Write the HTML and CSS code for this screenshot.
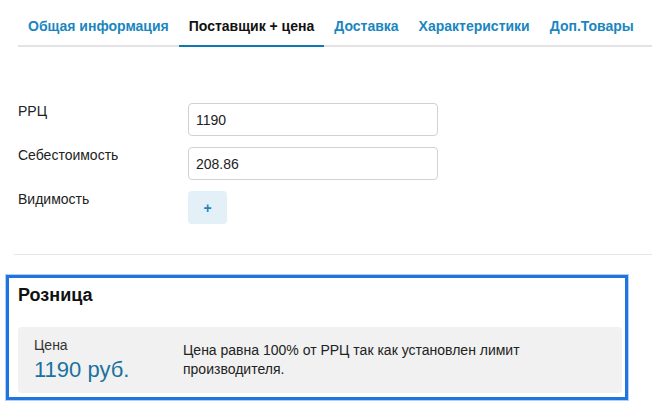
FILE: index.html
```html
<!DOCTYPE html>
<html lang="ru">
<head>
<meta charset="utf-8">
<link rel="stylesheet" href="styles.css">
</head>
<body>
<nav class="tabs">
  <a class="tab">Общая информация</a>
  <a class="tab active">Поставщик + цена</a>
  <a class="tab">Доставка</a>
  <a class="tab">Характеристики</a>
  <a class="tab">Доп.Товары</a>
</nav>
<form class="form">
  <div class="row">
    <label class="label">РРЦ</label>
    <input class="input" type="text" value="1190">
  </div>
  <div class="row">
    <label class="label">Себестоимость</label>
    <input class="input" type="text" value="208.86">
  </div>
  <div class="row">
    <label class="label">Видимость</label>
    <button class="plus" type="button">+</button>
  </div>
</form>
<hr class="sep">
<section class="retail">
  <h2 class="retail-title">Розница</h2>
  <div class="panel">
    <div class="price">
      <div class="price-label">Цена</div>
      <div class="price-value">1190 руб.</div>
    </div>
    <div class="desc">Цена равна 100% от РРЦ так как установлен лимит производителя.</div>
  </div>
</section>
</body>
</html>
```
FILE: styles.css
```css
* { box-sizing: border-box; }
html, body { margin: 0; padding: 0; background: #fff; }
body {
  font-family: "Liberation Sans", Arial, sans-serif;
  font-size: 14px;
  color: #222;
  overflow: hidden;
  width: 652px;
  height: 405px;
}
.tabs {
  display: flex;
  margin-left: 18px;
  margin-right: -20px;
  border-bottom: 2px solid #e3e3e3;
}
.tab {
  display: block;
  padding: 16px 10px 9px;
  line-height: 20px;
  font-weight: bold;
  color: #1a86bf;
  margin-bottom: -2px;
  border-bottom: 2px solid transparent;
}
.tab.active {
  color: #111;
  border-bottom-color: #0e79b2;
}
.form {
  margin: 0;
  padding: 56px 0 0 18px;
  display: flex;
  flex-direction: column;
  gap: 11px;
}
.row {
  display: flex;
  align-items: flex-start;
}
.label {
  width: 170px;
  line-height: 16px;
  color: #222;
}
.input {
  width: 250px;
  height: 33px;
  border: 1px solid #d2d2d2;
  border-radius: 4px;
  padding: 0 7px;
  font-family: "Liberation Sans", Arial, sans-serif;
  font-size: 14px;
  color: #222;
  outline: none;
}
.plus {
  width: 39px;
  height: 33px;
  border: none;
  border-radius: 4px;
  background: #e3f0f7;
  color: #1b86bd;
  font-family: "Liberation Sans", Arial, sans-serif;
  font-weight: bold;
  font-size: 14px;
  padding: 0;
}
.sep {
  margin: 30px -20px 0 14px;
  border: none;
  border-top: 1px solid #e6e6e6;
  height: 0;
}
.retail {
  margin: 20px 0 0 6px;
  width: 622px;
  border: 3px solid #1f74e0;
  box-shadow: 0 0 0 1px rgba(31, 116, 224, 0.35);
  padding: 6px 3px 4px 9px;
}
.retail-title {
  margin: 0;
  font-size: 18px;
  line-height: 22px;
  font-weight: bold;
  color: #111;
}
.panel {
  margin-top: 21px;
  background: #f1f1f1;
  border-radius: 4px;
  padding: 8px 16px 10px;
  display: flex;
  align-items: center;
}
.price {
  width: 149px;
  flex: none;
}
.price-label {
  line-height: 20px;
  color: #333;
}
.price-value {
  margin-top: 2px;
  font-size: 22px;
  line-height: 26px;
  color: #1b72a0;
}
.desc {
  line-height: 19px;
  color: #222;
  padding-top: 2px;
}
```
